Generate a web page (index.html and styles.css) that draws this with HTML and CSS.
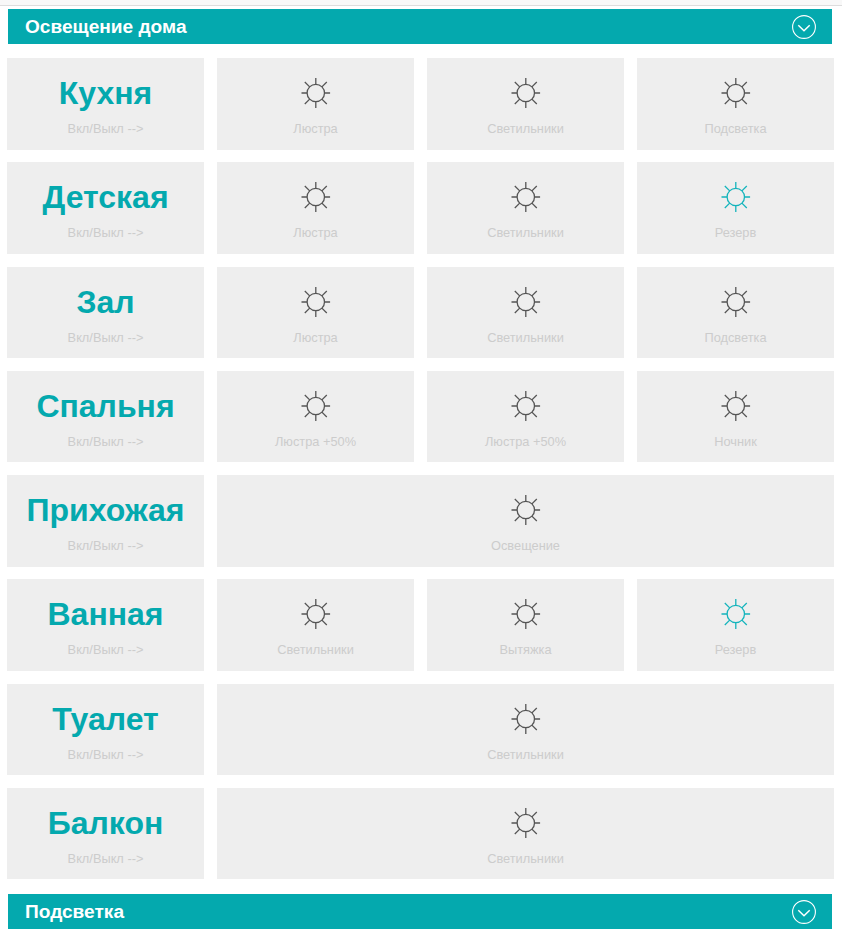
FILE: index.html
```html
<!DOCTYPE html>
<html lang="ru">
<head>
    <meta charset="UTF-8">
    <title>Освещение дома</title>
    <link rel="stylesheet" href="styles.css">
</head>
<body>
    <svg class="sprite" width="0" height="0">
        <symbol id="sun" viewBox="0 0 30 30">
            <circle cx="14.8" cy="15" r="8.7"/>
            <path d="M14.800 0v6.300M14.800 23.700v6.300M0.500 15h5.600M23.500 15h5.600M3.800 4l4.900 4.900M20.900 21.100l4.900 4.900M3.800 26l4.900-4.900M20.900 8.900l4.900-4.900"/>
        </symbol>
        <symbol id="chevron" viewBox="0 0 24 24">
            <circle cx="12" cy="12" r="11.4"/>
            <path class="chevron-mark" d="M6.300 10.200l5.700 5.600 5.700-5.600"/>
        </symbol>
    </svg>

    <div class="topline"></div>

    <div class="section-head">
        <span>Освещение дома</span>
        <svg class="chevron"><use href="#chevron"/></svg>
    </div>

    <div class="rooms">
        <div class="cell room"><div class="room-name">Кухня</div><div class="label">Вкл/Выкл --&gt;</div></div>
        <div class="cell"><svg class="sun"><use href="#sun"/></svg><div class="label">Люстра</div></div>
        <div class="cell"><svg class="sun"><use href="#sun"/></svg><div class="label">Светильники</div></div>
        <div class="cell"><svg class="sun"><use href="#sun"/></svg><div class="label">Подсветка</div></div>

        <div class="cell room"><div class="room-name">Детская</div><div class="label">Вкл/Выкл --&gt;</div></div>
        <div class="cell"><svg class="sun"><use href="#sun"/></svg><div class="label">Люстра</div></div>
        <div class="cell"><svg class="sun"><use href="#sun"/></svg><div class="label">Светильники</div></div>
        <div class="cell"><svg class="sun on"><use href="#sun"/></svg><div class="label">Резерв</div></div>

        <div class="cell room"><div class="room-name">Зал</div><div class="label">Вкл/Выкл --&gt;</div></div>
        <div class="cell"><svg class="sun"><use href="#sun"/></svg><div class="label">Люстра</div></div>
        <div class="cell"><svg class="sun"><use href="#sun"/></svg><div class="label">Светильники</div></div>
        <div class="cell"><svg class="sun"><use href="#sun"/></svg><div class="label">Подсветка</div></div>

        <div class="cell room"><div class="room-name">Спальня</div><div class="label">Вкл/Выкл --&gt;</div></div>
        <div class="cell"><svg class="sun"><use href="#sun"/></svg><div class="label">Люстра +50%</div></div>
        <div class="cell"><svg class="sun"><use href="#sun"/></svg><div class="label">Люстра +50%</div></div>
        <div class="cell"><svg class="sun"><use href="#sun"/></svg><div class="label">Ночник</div></div>

        <div class="cell room"><div class="room-name">Прихожая</div><div class="label">Вкл/Выкл --&gt;</div></div>
        <div class="cell wide"><svg class="sun"><use href="#sun"/></svg><div class="label">Освещение</div></div>

        <div class="cell room"><div class="room-name">Ванная</div><div class="label">Вкл/Выкл --&gt;</div></div>
        <div class="cell"><svg class="sun"><use href="#sun"/></svg><div class="label">Светильники</div></div>
        <div class="cell"><svg class="sun"><use href="#sun"/></svg><div class="label">Вытяжка</div></div>
        <div class="cell"><svg class="sun on"><use href="#sun"/></svg><div class="label">Резерв</div></div>

        <div class="cell room"><div class="room-name">Туалет</div><div class="label">Вкл/Выкл --&gt;</div></div>
        <div class="cell wide"><svg class="sun"><use href="#sun"/></svg><div class="label">Светильники</div></div>

        <div class="cell room"><div class="room-name">Балкон</div><div class="label">Вкл/Выкл --&gt;</div></div>
        <div class="cell wide"><svg class="sun"><use href="#sun"/></svg><div class="label">Светильники</div></div>
    </div>

    <div class="section-head bottom">
        <span>Подсветка</span>
        <svg class="chevron"><use href="#chevron"/></svg>
    </div>
</body>
</html>
```

FILE: styles.css
```css
body {
    margin: 0;
    font-family: "Liberation Sans", Arial, sans-serif;
    background-color: #fff;
}

.sprite {
    display: block;
    position: absolute;
}

.topline {
    height: 5px;
    background-color: #f8f8f8;
    border-bottom: 1px solid #ddd;
    margin-bottom: 3px;
}

.section-head {
    display: flex;
    align-items: center;
    justify-content: space-between;
    box-sizing: border-box;
    height: 35px;
    width: 824px;
    margin-left: 8px;
    padding: 0 16px 0 17px;
    background-color: #04a9ae;
    color: #fff;
    font-size: 19.1px;
    font-weight: bold;
}

.section-head.bottom {
    margin-top: 14.625px;
}

.chevron {
    width: 24px;
    height: 24px;
    fill: none;
    stroke: #fff;
    stroke-width: 1.1;
}

.chevron-mark {
    stroke-width: 1.5;
}

.rooms {
    display: grid;
    grid-template-columns: repeat(4, 197px);
    grid-auto-rows: 91.5px;
    gap: 12.75px 13px;
    margin: 14.125px 0 0 7px;
}

.cell {
    display: flex;
    flex-direction: column;
    align-items: center;
    background-color: #eee;
    padding-top: 20px;
    box-sizing: border-box;
}

.wide {
    grid-column: span 3;
}

.room {
    padding-top: 15px;
}

.room-name {
    height: 40px;
    line-height: 40px;
    font-size: 32px;
    font-weight: bold;
    color: #04a9ae;
}

.sun {
    flex: none;
    width: 30px;
    height: 30px;
    margin-bottom: 5px;
    fill: none;
    stroke: #555;
    stroke-width: 1.3;
}

.sun.on {
    stroke: #14b4bc;
}

.label {
    margin-top: 9px;
    font-size: 12.8px;
    line-height: 14px;
    color: #ccc;
}
```
